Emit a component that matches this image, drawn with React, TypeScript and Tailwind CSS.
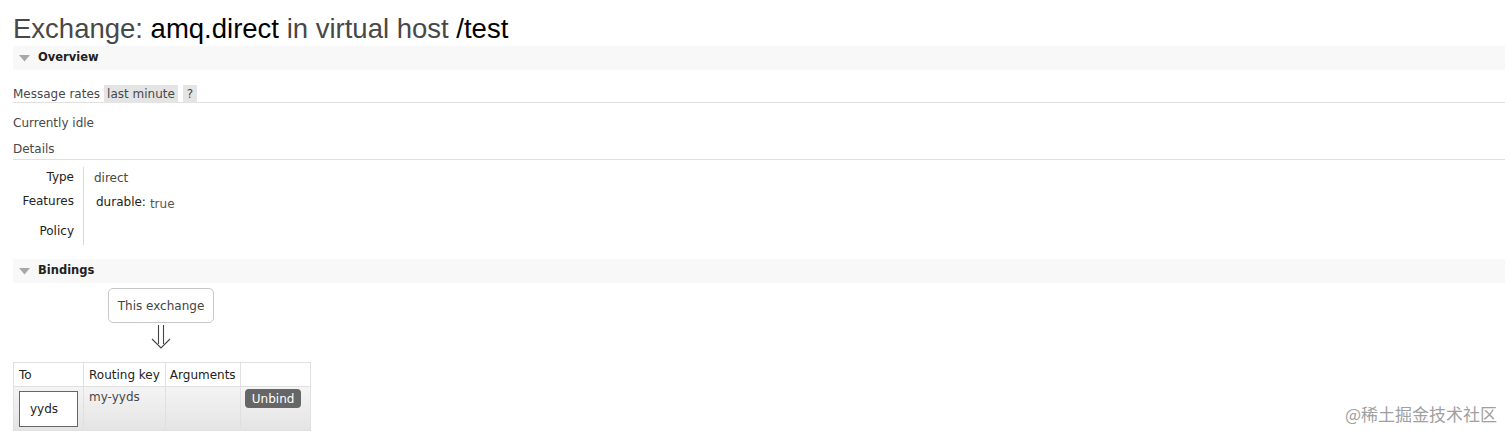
import React from 'react';

const verdana = "font-['Verdana','DejaVu_Sans',sans-serif]";

function SectionBar({ title }: { title: string }) {
  return (
    <div className="flex h-[24px] items-center bg-[#f8f8f8] pl-[6px]">
      <svg width="11" height="7" viewBox="0 0 11 7" className="mr-[8px]">
        <polygon points="0,0 11,0 5.5,6.5" fill="#a8a8a8" />
      </svg>
      <span className="text-[11.5px] font-bold text-[#222]">{title}</span>
    </div>
  );
}

export default function App() {
  return (
    <div className={`${verdana} h-[439px] w-[1512px] overflow-hidden bg-white pl-[13px] pr-[7px] text-[12px] text-[#484848]`}>
      {/* Titel */}
      <h1 className="h-[46px] pt-[12px] font-['Liberation_Sans',Arial,sans-serif] text-[27.5px] leading-[34px] text-[#484848]">
        Exchange: <span className="text-black">amq.direct</span> in virtual host <span className="text-black">/test</span>
      </h1>

      <SectionBar title="Overview" />

      <div className="mt-[15px] flex h-[18px] items-center border-b border-[#e0e0e0] pb-0">
        <span className="mr-[4px]">Message rates</span>
        <span className="flex h-[18px] items-center bg-[#e4e4e4] px-[3px]">last minute</span>
        <span className="ml-[5px] flex h-[18px] items-center bg-[#e4e4e4] px-[4px]">?</span>
      </div>

      <div className="mt-[12px] leading-[16px]">Currently idle</div>

      <div className="mt-[10px] border-b border-[#e0e0e0] pb-[2px] leading-[16px]">Details</div>

      {/* Details-Tabelle */}
      <div className="mt-[7px] flex h-[78px]">
        <div className="flex w-[70px] flex-col items-end pr-[9px] text-[#222]">
          <div className="mt-[2px] leading-[16px]">Type</div>
          <div className="mt-[8px] leading-[16px]">Features</div>
          <div className="mt-[14px] leading-[16px]">Policy</div>
        </div>
        <div className="border-l border-[#d8d8d8] pl-[10px]">
          <div className="mt-[3px] leading-[16px]">direct</div>
          <div className="mt-[8px] flex items-end pl-[2px] leading-[16px]">
            <span className="text-[#222]">durable:</span>
            <span className="ml-[4px] translate-y-[2px] text-[#555]">true</span>
          </div>
        </div>
      </div>

      <div className="mt-[14px]">
        <SectionBar title="Bindings" />
      </div>

      {/* Bindings */}
      <div className="ml-[95px] mt-[5px] flex w-[106px] flex-col items-center">
        <div className="flex h-[35px] w-[106px] items-center justify-center rounded-[5px] border border-[#c8c8c8] text-[#444]">
          This exchange
        </div>
        <svg width="24" height="24" viewBox="0 0 24 24" className="mt-[2px]">
          <path d="M9.5 0 V19 M14.5 0 V19 M3 14 L12 23 L21 14" stroke="#444" strokeWidth="1.1" fill="none" />
        </svg>
      </div>

      <div className="mt-[13px] flex items-end justify-between">
        <table className="border-collapse whitespace-nowrap text-[12px]">
          <thead>
            <tr className="h-[24px]">
              <th className="w-[70px] border border-[#e0e0e0] px-[5px] text-left font-normal text-[#222]">To</th>
              <th className="w-[81px] border border-[#e0e0e0] px-[5px] text-left font-normal text-[#222]">Routing key</th>
              <th className="w-[75px] border border-[#e0e0e0] px-[4px] text-left font-normal text-[#222]">Arguments</th>
              <th className="w-[70px] border border-[#e0e0e0]"></th>
            </tr>
          </thead>
          <tbody>
            <tr className="h-[44px] bg-gradient-to-b from-[#f4f4f4] to-[#e4e4e4]">
              <td className="border border-[#e0e0e0] px-[5px] align-middle">
                <div className="flex h-[36px] w-[59px] items-center border border-[#666] bg-white pl-[10px] text-[#222]">yyds</div>
              </td>
              <td className="border border-[#e0e0e0] px-[5px] pt-[1px] align-top leading-[18px]">my-yyds</td>
              <td className="border border-[#e0e0e0]"></td>
              <td className="border border-[#e0e0e0] px-[4px] align-top">
                <span className="mt-[2px] inline-flex h-[19px] items-center rounded-[4px] bg-[#666] px-[7px] text-white">Unbind</span>
              </td>
            </tr>
          </tbody>
        </table>
        <span className="mb-[5px] mr-[8px] font-['Noto_Sans_CJK_SC',sans-serif] text-[17px] leading-[24px] text-[#a0a0a0]">@稀土掘金技术社区</span>
      </div>
    </div>
  );
}
